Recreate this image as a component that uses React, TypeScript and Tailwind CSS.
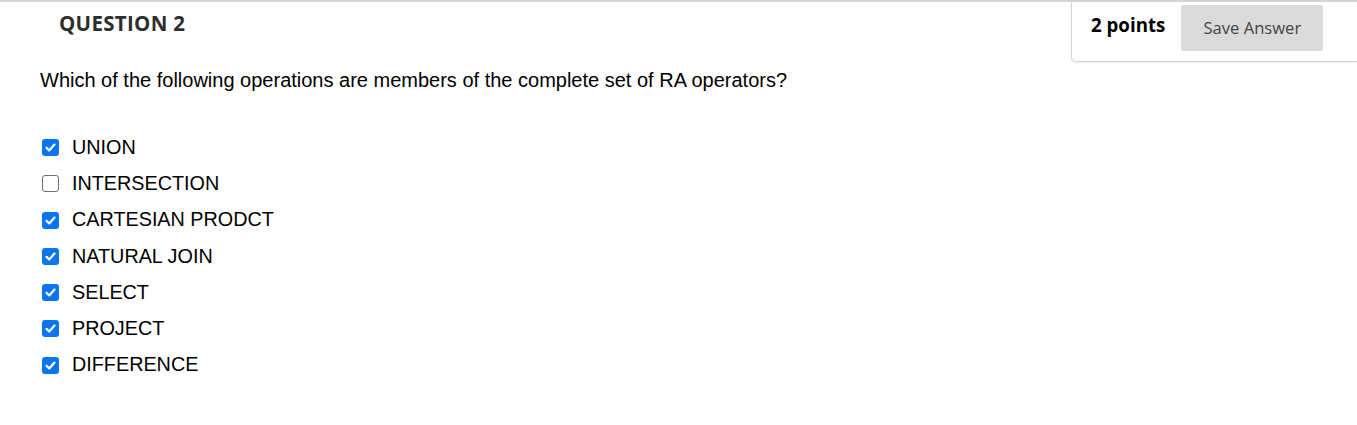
import React from "react";

const options = [
  { label: "UNION", checked: true },
  { label: "INTERSECTION", checked: false },
  { label: "CARTESIAN PRODCT", checked: true },
  { label: "NATURAL JOIN", checked: true },
  { label: "SELECT", checked: true },
  { label: "PROJECT", checked: true },
  { label: "DIFFERENCE", checked: true },
];

const Box: React.FC<{ checked: boolean }> = ({ checked }) =>
  checked ? (
    <span className="flex h-[17px] w-[17px] items-center justify-center rounded-[3px] bg-[#0b75f0]">
      <svg width="13" height="13" viewBox="0 0 13 13" fill="none">
        <path d="M2.5 6.8 L5.2 9.4 L10.5 3.6" stroke="white" strokeWidth="2.2" strokeLinecap="round" strokeLinejoin="round" />
      </svg>
    </span>
  ) : (
    <span className="block h-[17px] w-[17px] rounded-[3px] border-[1.5px] border-[#707070] bg-white" />
  );

export default function App() {
  return (
    <div className="min-h-screen w-full border-t-2 border-[#d4d4d4] bg-white">
      {/* Header */}
      <div className="flex h-[60px] items-start">
        <h2 className="pl-[59px] pt-[6px] font-['Open_Sans',sans-serif] text-[20.5px] font-bold tracking-[0.3px] text-[#2e2e2e]">
          QUESTION 2
        </h2>
        <div className="ml-auto flex h-[60px] w-[286px] items-start rounded-bl-[5px] border-b border-l border-[#d6d6d6] pl-[19px] pt-[3px] shadow-[0_1px_2px_rgba(0,0,0,0.08)]">
          <span className="mt-[6px] font-['Open_Sans',sans-serif] text-[18.7px] font-bold text-black">
            2 points
          </span>
          <button className="ml-[16px] h-[46px] w-[142px] rounded-[2px] bg-[#dadada] font-['Open_Sans',sans-serif] text-[16.6px] text-[#444]">
            Save Answer
          </button>
        </div>
      </div>

      {/* Question */}
      <div className="px-[40px] font-['Liberation_Sans',Arial,sans-serif] text-black">
        <p className="mt-[3px] text-[20px]">
          Which of the following operations are members of the complete set of RA operators?
        </p>
        <ul className="mt-[41px] flex flex-col gap-[13.3px]">
          {options.map((o) => (
            <li key={o.label} className="flex h-[23px] items-center gap-[13px] pl-[2px] text-[19.8px]">
              <Box checked={o.checked} />
              <span>{o.label}</span>
            </li>
          ))}
        </ul>
      </div>
    </div>
  );
}
